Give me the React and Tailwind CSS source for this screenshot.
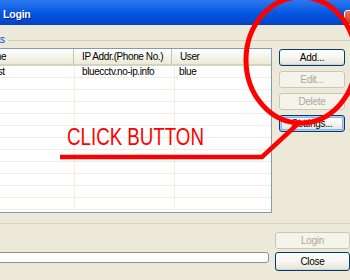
import React from 'react';

const rows = [
  { name: 'Guest', ip: 'bluecctv.no-ip.info', user: 'blue' },
  {}, {}, {}, {}, {}, {}, {}, {}, {}, {}, {},
];

function XpButton({ children, disabled, focused, className = '' }) {
  if (disabled) {
    return (
      <div className={`flex items-center justify-center rounded-[3px] border border-[#C9C7BA] bg-[#F5F4EA] text-[10px] tracking-[-0.3px] text-[#ACA899] ${className}`}>
        {children}
      </div>
    );
  }
  return (
    <div className={`flex items-center justify-center rounded-[3px] border border-[#003C74] bg-gradient-to-b from-white via-[#F6F5F0] to-[#E3E2DA] text-[10px] tracking-[-0.3px] text-black ${focused ? 'shadow-[inset_0_0_0_1px_#B5CDF2,inset_0_0_0_2px_#8CB0EA]' : 'shadow-[inset_0_-1px_0_#D6D0C5]'} ${className}`}>
      {children}
    </div>
  );
}

export default function App() {
  return (
    <div className="relative w-[350px] h-[280px] overflow-hidden bg-[#ECE9D8] font-['Liberation_Sans',Arial,sans-serif]">
      {/* title bar */}
      <div className="flex h-[25px] justify-between bg-gradient-to-b from-[#2C78EC] via-[#0558E2] to-[#0343C4]">
        <span className="pl-[3px] pt-[9px] text-[10.5px] font-bold leading-[11px] tracking-[-0.2px] text-white [text-shadow:1px_1px_0_#0A1E8C]">Login</span>
        <div className="mt-[10px] -mr-[8px] h-[15px] w-[14px] rounded-[3px] border border-white bg-gradient-to-b from-[#E9795A] to-[#C8381A]" />
      </div>

      {/* body */}
      <div className="flex flex-col">
        <div className="mt-[10px] flex h-[10px] items-center">
          <span className="-ml-[19px] whitespace-nowrap text-[10px] leading-[10px] tracking-[-0.4px] text-[#0046D5]">Hosts</span>
          <div className="ml-[3px] h-px flex-1 bg-[#D0D0BF]" />
        </div>

        <div className="mt-[3px] flex">
          {/* list view */}
          <div className="-ml-[23px] flex h-[165px] w-[295px] flex-col border border-[#7F9DB9] bg-white text-[10px] tracking-[-0.4px] text-black">
            <div className="flex h-[17px] shrink-0 border-b-[2px] border-[#D6D2C2] bg-gradient-to-b from-white to-[#EBEAD8]">
              <div className="flex w-[96px] items-center whitespace-nowrap border-r border-[#C7C5B2] pl-[3px] leading-none">Name</div>
              <div className="flex w-[98px] items-center whitespace-nowrap border-r border-[#C7C5B2] pl-[8px] leading-none">IP Addr.(Phone No.)</div>
              <div className="flex flex-1 items-center whitespace-nowrap pl-[8px] leading-none">User</div>
            </div>
            {rows.map((r, i) => (
              <div key={i} className="flex h-[12px] shrink-0 whitespace-nowrap border-b border-[#EFEEDF] leading-[12px]">
                <div className="w-[97px] border-r border-[#EFEEDF] pl-[2px]">{r.name}</div>
                <div className="w-[100px] border-r border-[#EFEEDF] pl-[7px]">{r.ip}</div>
                <div className="flex-1 pl-[4px]">{r.user}</div>
              </div>
            ))}
          </div>

          {/* side buttons */}
          <div className="ml-[7px] mt-[1px] flex w-[66px] flex-col gap-[5px]">
            <XpButton className="h-[17px]">Add...</XpButton>
            <XpButton disabled className="h-[17px]">Edit...</XpButton>
            <XpButton disabled className="h-[17px]">Delete</XpButton>
            <XpButton focused className="h-[17px]">Settings...</XpButton>
          </div>
        </div>

        <div className="mt-[10px] h-px bg-[#D8D4C4]" />

        <div className="mt-[8px] flex">
          <div className="-ml-[18px] mt-[20px] h-[11px] w-[290px] rounded-[3px] border border-[#8E8F8F] bg-white" />
          <div className="ml-[6px] flex w-[76px] flex-col gap-[3px]">
            <XpButton disabled className="h-[17px]">Login</XpButton>
            <XpButton className="h-[19px]">Close</XpButton>
          </div>
        </div>
      </div>

      {/* red annotation overlay */}
      <svg className="pointer-events-none absolute left-0 top-0" width="350" height="280" viewBox="0 0 350 280">
        <ellipse cx="301" cy="60" rx="55" ry="63" fill="none" stroke="#FF0000" strokeWidth="5" />
        <polyline points="60,157 262,157 301,121" fill="none" stroke="#FF0000" strokeWidth="4.5" />
      </svg>
      <div className="absolute left-[67px] top-[125px] origin-left scale-x-[0.78] whitespace-nowrap text-[24px] leading-[24px] text-[#FF0000]">CLICK BUTTON</div>
    </div>
  );
}
